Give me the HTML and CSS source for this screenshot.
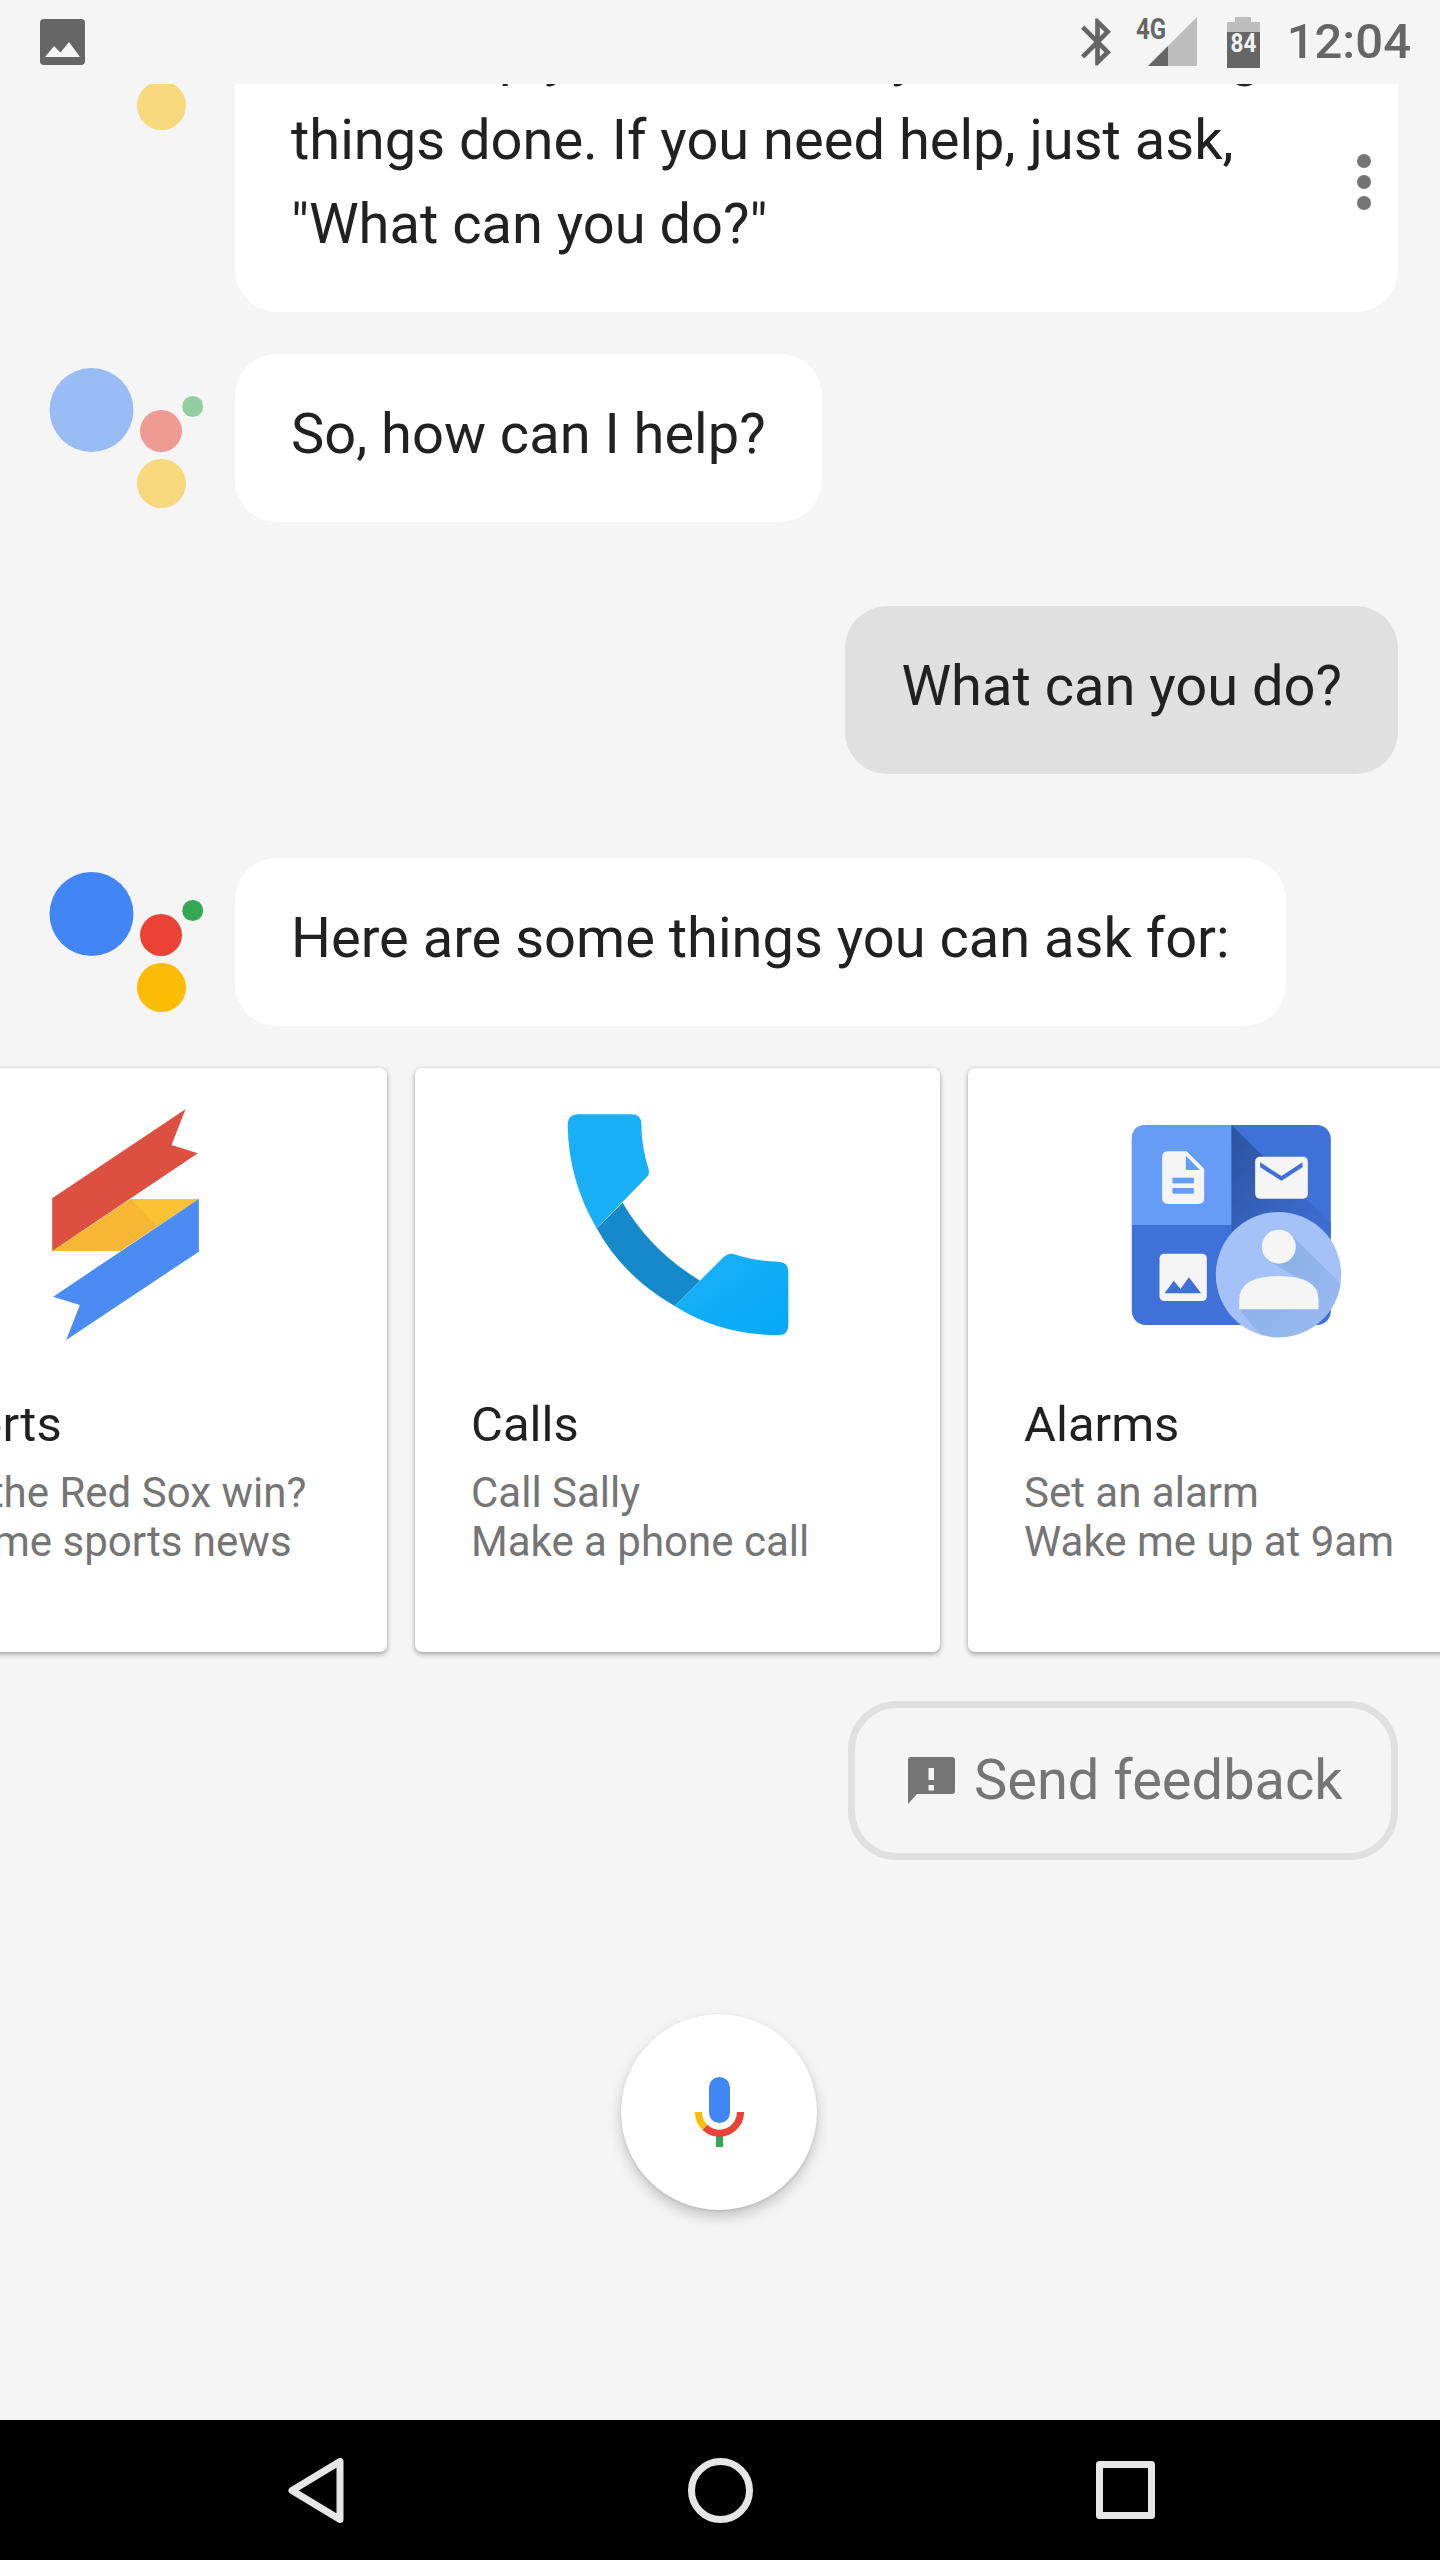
FILE: index.html
```html
<!DOCTYPE html>
<html lang="en">
<head>
<meta charset="utf-8">
<title>Assistant</title>
<link rel="stylesheet" href="styles.css">
</head>
<body>
<div class="screen">
  <header class="status">
    <svg class="status-photo" viewBox="0 0 45 46"><rect width="45" height="46" rx="4" fill="#666"/><path d="M5 38 14 27 20.500 33.500 29 23 40 38Z" fill="#f5f5f5"/></svg>
    <div class="status-right">
      <svg class="status-bt" viewBox="5 2 12.710 20"><path fill="#666" d="M17.710 7.710 12 2h-1v7.590L6.410 5 5 6.410 10.590 12 5 17.590 6.410 19 11 14.410V22h1l5.710-5.710-4.300-4.290 4.300-4.290zM13 5.830l1.880 1.880L13 9.590V5.830zm1.880 10.460L13 18.170v-3.760l1.880 1.880z"/></svg>
      <div class="status-signal">
        <svg viewBox="0 0 61 50" class="status-signal-svg"><path d="M12 49 61 0V49Z" fill="#bdbdbd"/><path d="M12 49 32 29V49Z" fill="#666"/></svg>
        <span class="status-4g">4G</span>
      </div>
      <div class="status-battery">
        <svg viewBox="0 0 33 51" class="status-battery-svg"><path d="M8 0H24V5H33V15H0V5H8Z" fill="#bdbdbd"/><path d="M0 15H33V51H0Z" fill="#666"/></svg>
        <span class="status-84">84</span>
      </div>
      <span class="status-time">12:04</span>
    </div>
  </header>

  <main class="main">
    <section class="chat">
      <div class="row row-first">
        <svg class="avatar avatar-faded" viewBox="0 0 195 168"><circle cx="51.500" cy="56" r="42" fill="#4285f4"/><circle cx="121" cy="77" r="21" fill="#ea4335"/><circle cx="121.500" cy="129.500" r="24.500" fill="#fbbc05"/><circle cx="152.700" cy="52.500" r="10.500" fill="#34a853"/></svg>
        <div class="bubble bubble-menu">I can help you learn and you can even get<br>things done. If you need help, just ask,<br>"What can you do?"
          <span class="dots"><i></i><i></i><i></i></span>
        </div>
      </div>
      <div class="row row-gap">
        <svg class="avatar avatar-faded" viewBox="0 0 195 168"><circle cx="51.500" cy="56" r="42" fill="#4285f4"/><circle cx="121" cy="77" r="21" fill="#ea4335"/><circle cx="121.500" cy="129.500" r="24.500" fill="#fbbc05"/><circle cx="152.700" cy="52.500" r="10.500" fill="#34a853"/></svg>
        <div class="bubble">So, how can I help?</div>
      </div>
      <div class="row row-user">
        <div class="bubble bubble-user">What can you do?</div>
      </div>
      <div class="row row-answer">
        <svg class="avatar" viewBox="0 0 195 168"><circle cx="51.500" cy="56" r="42" fill="#4285f4"/><circle cx="121" cy="77" r="21" fill="#ea4335"/><circle cx="121.500" cy="129.500" r="24.500" fill="#fbbc05"/><circle cx="152.700" cy="52.500" r="10.500" fill="#34a853"/></svg>
        <div class="bubble">Here are some things you can ask for:</div>
      </div>

      <div class="cards">
        <article class="card">
          <svg class="card-art" viewBox="0 0 340 280">
            <g transform="translate(45.500 -40) scale(.33333)">
              <path d="M155 603 390 447H595L360 603Z" fill="#f8b635"/>
              <path d="M390 447H595L468 527Z" fill="#fbc234"/>
              <path d="M155 445 555 178 513 285 592 310 155 603Z" fill="#dd4f41"/>
              <path d="M595 447V605L197 870 238 765 158 740Z" fill="#4a8cf3"/>
            </g>
          </svg>
          <h3 class="card-title">Sports</h3>
          <p class="card-text">Did the Red Sox win?<br>Get me sports news</p>
        </article>
        <article class="card">
          <svg class="card-art" viewBox="0 0 340 280">
            <defs>
              <linearGradient id="ph" x1="0" y1="0" x2="1" y2="1"><stop offset="0" stop-color="#1db2f9"/><stop offset="1" stop-color="#03a9f4"/></linearGradient>
            </defs>
            <g transform="translate(-8 0) scale(.33333)">
              <path d="M290 415 368 338Q450 480 600 572L524 648Q370 560 290 415Z" fill="#1689cb"/>
              <path d="M235 73H395Q424 73 424 102 424 170 446 238 450 252 440 262L290 415Q205 270 203 105 203 73 235 73Z" fill="#1ab0f8"/>
              <path d="M524 648 672 500Q685 488 700 492 770 515 835 515 865 515 865 545V705Q865 735 835 735 660 735 524 648Z" fill="url(#ph)"/>
            </g>
          </svg>
          <h3 class="card-title">Calls</h3>
          <p class="card-text">Call Sally<br>Make a phone call</p>
        </article>
        <article class="card">
          <svg class="card-art" viewBox="0 0 340 280">
            <defs>
              <linearGradient id="sh1" x1="0" y1="0" x2="1" y2="1"><stop offset="0" stop-color="#2b539e"/><stop offset="1" stop-color="#3e70d6"/></linearGradient>
              <linearGradient id="sh2" x1="0" y1="0" x2="1" y2="1"><stop offset="0" stop-color="#86abe2"/><stop offset="1" stop-color="#9bbcf3"/></linearGradient>
              <clipPath id="cc"><circle cx="594" cy="554" r="188"/></clipPath>
            </defs>
            <g transform="translate(19.500 0) scale(.33333)">
              <rect x="154" y="105" width="597" height="600" rx="42" fill="#3f71d8"/>
              <path d="M453 105V405H154V147Q154 105 196 105Z" fill="#659cf6"/>
              <path d="M453 105 751 400V440L453 425Z" fill="url(#sh1)"/>
              <path d="M262 184H318L371 236V325Q371 342 354 342H262Q245 342 245 325V201Q245 184 262 184Z" fill="#f5f5f5"/>
              <path d="M316 197 358 240H316Z" fill="#659cf6"/>
              <rect x="276" y="263" width="64" height="17" fill="#659cf6"/>
              <rect x="276" y="294" width="64" height="17" fill="#659cf6"/>
              <rect x="524" y="200" width="158" height="126" rx="14" fill="#f5f5f5"/>
              <path d="M539 217 603 258 666 217V232L603 272 539 232Z" fill="#3e70d6"/>
              <rect x="237" y="491" width="142" height="142" rx="14" fill="#f5f5f5"/>
              <path d="M252 610 280 572 300 597 325 562 362 610Z" fill="#3e70d6"/>
              <circle cx="594" cy="554" r="188" fill="#a4c2f7"/>
              <path clip-path="url(#cc)" d="M632 435 800 600V760H560L476 658H714V600L560 510Z" fill="url(#sh2)"/>
              <circle cx="595" cy="470" r="51" fill="#f5f5f5"/>
              <path d="M476 658V630Q476 558 595 558 714 558 714 630V658Z" fill="#f5f5f5"/>
            </g>
          </svg>
          <h3 class="card-title">Alarms</h3>
          <p class="card-text">Set an alarm<br>Wake me up at 9am</p>
        </article>
      </div>

      <div class="feedback-row">
        <button class="feedback" type="button">
          <svg class="feedback-icon" viewBox="0 0 47 47"><path d="M3 0H44Q47 0 47 3V34Q47 37 44 37H9L0 47V3Q0 0 3 0Z" fill="#757575"/><path d="M20.500 11H26V23H20.500ZM20.500 28H26V33.500H20.500Z" fill="#f5f5f5"/></svg>
          <span class="feedback-label">Send feedback</span>
        </button>
      </div>
    </section>

    <div class="mic-bar">
      <div class="mic">
        <svg class="mic-svg" viewBox="0 0 49 70">
          <path d="M24.500 0A10.500 10.500 0 0 1 35 10.500V35.500A10.500 10.500 0 0 1 14 35.500V10.500A10.500 10.500 0 0 1 24.500 0Z" fill="#4285f4"/>
          <path d="M21 59H28V70H21Z" fill="#34a853"/>
          <path d="M45.500 35A21 21 0 0 1 9.800 50.200" fill="none" stroke="#ea4335" stroke-width="7"/>
          <path d="M9.800 50.200A21 21 0 0 1 3.500 35" fill="none" stroke="#fbbc05" stroke-width="7"/>
        </svg>
      </div>
    </div>
  </main>

  <nav class="nav">
    <svg class="nav-back" viewBox="0 0 56 65"><path d="M52 3.500V61.500L4 32.500Z" fill="none" stroke="#e6e6e6" stroke-width="7" stroke-linejoin="round"/></svg>
    <svg class="nav-home" viewBox="0 0 65 65"><circle cx="32.500" cy="32.500" r="29" fill="none" stroke="#e6e6e6" stroke-width="7"/></svg>
    <svg class="nav-recent" viewBox="0 0 59 58"><rect x="3.500" y="3.500" width="52" height="51" fill="none" stroke="#e6e6e6" stroke-width="7" stroke-linejoin="round"/></svg>
  </nav>
</div>
</body>
</html>
```

FILE: styles.css
```css
* { box-sizing: border-box; }
html, body { margin: 0; padding: 0; }
body { background: #f5f5f5; font-family: Roboto, "Noto Sans", sans-serif; color: #212121; }

.screen { width: 1440px; height: 2560px; display: flex; flex-direction: column; overflow: hidden; background: #f5f5f5; }

/* status bar */
.status { flex: none; height: 84px; display: flex; align-items: center; justify-content: space-between; padding: 0 29px 0 40px; position: relative; z-index: 2; background: #f5f5f5; }
.status-photo { width: 45px; height: 46px; display: block; }
.status-right { display: flex; align-items: center; }
.status-bt { width: 30px; height: 50px; display: block; }
.status-signal { position: relative; width: 61px; height: 50px; margin-left: 25px; }
.status-signal-svg { width: 61px; height: 50px; display: block; }
.status-4g { position: absolute; left: 0; top: -1px; font-size: 30px; line-height: 26px; font-weight: 700; color: #666; transform: scaleX(.8); transform-origin: left; }
.status-battery { position: relative; width: 33px; height: 51px; margin-left: 30px; }
.status-battery-svg { width: 33px; height: 51px; display: block; }
.status-84 { position: absolute; left: 0; right: 0; top: 17px; text-align: center; font-size: 25px; line-height: 20px; font-weight: 700; color: #f5f5f5; transform: scaleX(.9); }
.status-time { margin-left: 27px; font-size: 49px; line-height: 50px; font-weight: 500; color: #666; }

/* main */
.main { flex: 1; min-height: 0; display: flex; flex-direction: column; }
.chat { flex: 1; min-height: 0; overflow: hidden; display: flex; flex-direction: column; }

.row { display: flex; padding: 0 42px 0 40px; }
.row-first { margin-top: -108px; }
.row-gap { margin-top: 42px; }
.row-user { margin-top: 84px; justify-content: flex-end; }
.row-answer { margin-top: 84px; }

.avatar { flex: none; width: 195px; height: 168px; display: block; }
.avatar-faded { opacity: .5; }
.row-first .avatar { align-self: flex-start; }

.bubble { position: relative; background: #fff; border-radius: 42px; padding: 38px 56px 46px; font-size: 56px; line-height: 84px; color: #212121; white-space: nowrap; }
.bubble-menu { flex: 1; min-width: 0; }
.bubble-user { background: #e0e0e0; }
.dots { position: absolute; right: 27px; top: 178px; display: flex; flex-direction: column; gap: 7px; }
.dots i { display: block; width: 14px; height: 14px; border-radius: 50%; background: #757575; }

/* cards */
.cards { display: flex; gap: 28px; margin: 42px 0 0 -138px; flex: none; }
.card { flex: none; width: 525px; height: 584px; background: #fff; border-radius: 7px; padding-top: 22px; box-shadow: 0 3px 5px rgba(0,0,0,.26), 0 0 4px rgba(0,0,0,.14); }
.card-art { display: block; width: 340px; height: 280px; margin: 0 auto; }
.card-title { margin: 27px 0 0; padding: 0 0 0 56px; font-size: 49px; line-height: 56px; font-weight: 400; color: #212121; }
.card-text { margin: 0; padding: 15px 0 0 56px; font-size: 42px; line-height: 49px; color: #757575; white-space: nowrap; }

/* feedback */
.feedback-row { display: flex; justify-content: flex-end; padding: 49px 42px 0 0; flex: none; }
.feedback { display: flex; align-items: center; gap: 19px; width: 550px; height: 159px; padding: 0 0 0 53px; background: transparent; border: 7px solid #e0e0e0; border-radius: 49px; font: inherit; font-size: 56px; line-height: 64px; color: #757575; }
.feedback-icon { width: 47px; height: 47px; flex: none; display: block; }
.feedback-label { padding-bottom: 2px; }

/* mic */
.mic-bar { flex: none; display: flex; justify-content: center; padding: 56px 2px 210px 0; }
.mic { width: 196px; height: 196px; border-radius: 50%; background: #fff; display: flex; align-items: center; justify-content: center; box-shadow: 0 7px 14px rgba(0,0,0,.2), 0 1px 3px rgba(0,0,0,.1); }
.mic-svg { width: 49px; height: 70px; display: block; }

/* nav */
.nav { flex: none; height: 140px; background: #000; display: flex; align-items: center; padding-left: 288px; }
.nav-back { width: 56px; height: 65px; display: block; }
.nav-home { width: 65px; height: 65px; display: block; margin-left: 344px; }
.nav-recent { width: 59px; height: 58px; display: block; margin-left: 343px; }
```
